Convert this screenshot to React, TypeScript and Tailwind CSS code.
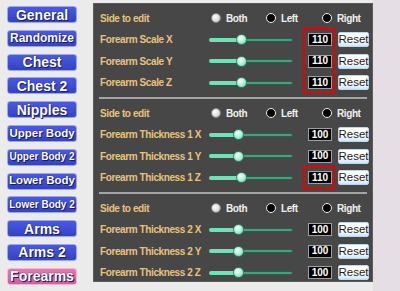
import React from "react";

const tabs = [
  { label: "General", size: "text-[14px]" },
  { label: "Randomize", size: "text-[12px]" },
  { label: "Chest", size: "text-[14px]" },
  { label: "Chest 2", size: "text-[14px]" },
  { label: "Nipples", size: "text-[14px]" },
  { label: "Upper Body", size: "text-[11.5px]" },
  { label: "Upper Body 2", size: "text-[10px]" },
  { label: "Lower Body", size: "text-[11.5px]" },
  { label: "Lower Body 2", size: "text-[10px]" },
  { label: "Arms", size: "text-[14px]" },
  { label: "Arms 2", size: "text-[14px]" },
  { label: "Forearms", size: "text-[14px]", active: true },
];

type Row = { label: string; value: number; mark?: boolean };

const sections: { rows: Row[]; markAll?: boolean }[] = [
  {
    markAll: true,
    rows: [
      { label: "Forearm Scale X", value: 110 },
      { label: "Forearm Scale Y", value: 110 },
      { label: "Forearm Scale Z", value: 110 },
    ],
  },
  {
    rows: [
      { label: "Forearm Thickness 1 X", value: 100 },
      { label: "Forearm Thickness 1 Y", value: 100 },
      { label: "Forearm Thickness 1 Z", value: 110, mark: true },
    ],
  },
  {
    rows: [
      { label: "Forearm Thickness 2 X", value: 100 },
      { label: "Forearm Thickness 2 Y", value: 100 },
      { label: "Forearm Thickness 2 Z", value: 100 },
    ],
  },
];

const Radio = ({ label, on }: { label: string; on?: boolean }) => (
  <div className="flex items-center gap-[5px]">
    {on ? (
      <span className="w-[10px] h-[10px] rounded-full border border-[#8a8a8a] bg-[radial-gradient(circle_at_40%_40%,#ffffff_0%,#e4e4e4_45%,#a8a8a8_100%)]" />
    ) : (
      <span className="w-[10px] h-[10px] rounded-full border-[1.5px] border-[#f2f2f2] bg-black" />
    )}
    <span className="text-[#f0f0f0]">{label}</span>
  </div>
);

const Slider = ({ value }: { value: number }) => {
  const x = value * 0.3;
  return (
    <div className="relative w-[85px] h-[11px] flex items-center">
      <div className="w-full h-[4px] rounded-full bg-[#45a07e] border-[0.5px] border-[#2c5d4a]" />
      <div
        className="absolute left-0 h-[4px] rounded-full bg-[#6be4b8]"
        style={{ width: x }}
      />
      <div
        className="absolute top-0 w-[11px] h-[11px] rounded-full border border-[#2f8467] bg-[radial-gradient(circle_at_40%_35%,#f2fff9_0%,#b9f5dc_40%,#5fd6a8_100%)]"
        style={{ left: x - 5.5 }}
      />
    </div>
  );
};

const ValueRow = ({ row }: { row: Row }) => (
  <div className="relative flex items-center h-[21.5px] pl-[3px]">
    <span className="w-[110px]">{row.label}</span>
    <Slider value={row.value} />
    <div className="ml-[15px] w-[24px] h-[13px] flex items-center justify-center bg-black border border-[#a0a0a0] text-white text-[10px] tracking-normal leading-none font-bold">
      {row.value}
    </div>
    <div className="ml-[6px] w-[31px] h-[15px] flex items-center justify-center rounded-[2px] border border-[#b8d8f0] bg-[linear-gradient(#ffffff_55%,#cfe6fb)] text-[#1a1a1a] text-[11.5px] tracking-normal font-normal leading-none">
      Reset
    </div>
    {row.mark && (
      <div className="absolute left-[206px] top-[-1px] w-[32px] h-[24px] border-[2.5px] border-[#e60000]" />
    )}
  </div>
);

export default function App() {
  return (
    <div
      className="w-[400px] h-[291px] flex bg-[#ebebeb] overflow-hidden"
      style={{ fontFamily: '"Liberation Sans", Arial, sans-serif' }}
    >
      <div className="w-[93px] shrink-0 flex flex-col gap-[6.8px] pt-[6px] pl-[7px]">
        {tabs.map((t) => (
          <div
            key={t.label}
            className={`w-[70px] h-[17px] flex items-center justify-center rounded-[3px] border font-bold text-white leading-none [text-shadow:0_0_1px_#101030,1px_1px_0_#20205a] ${t.size} ${
              t.active
                ? "bg-[linear-gradient(#e67ab2,#d45a98)] border-[#f6b6d6]"
                : "bg-[linear-gradient(#4a5ae0,#3442c4)] border-[#9aa6f0]"
            }`}
          >
            {t.label}
          </div>
        ))}
      </div>

      <div className="w-[280px] shrink-0 pt-[3px]">
        <div className="h-[279px] bg-[#474747] border border-[#5c5c5c] px-[3px] pt-[3.5px] text-[10px] tracking-[-0.4px] font-bold text-[#e8c37e]">
          {sections.map((s, i) => (
            <div key={i}>
              {i > 0 && <div className="mx-[2px] my-[3.5px] h-[2px] bg-[#a4a4a4]" />}
              <div className="flex items-center h-[21.5px] pl-[3px]">
                <span className="w-[111px]">Side to edit</span>
                <div className="w-[55px]">
                  <Radio label="Both" on />
                </div>
                <div className="w-[56px]">
                  <Radio label="Left" />
                </div>
                <Radio label="Right" />
              </div>
              <div className="relative">
                {s.rows.map((r) => (
                  <ValueRow key={r.label} row={r} />
                ))}
                {s.markAll && (
                  <div className="absolute left-[206px] top-[-1px] w-[32px] h-[66px] border-[2.5px] border-[#e60000]" />
                )}
              </div>
            </div>
          ))}
        </div>
      </div>

      <div className="flex-1 bg-[#e5dfe5]" />
    </div>
  );
}
